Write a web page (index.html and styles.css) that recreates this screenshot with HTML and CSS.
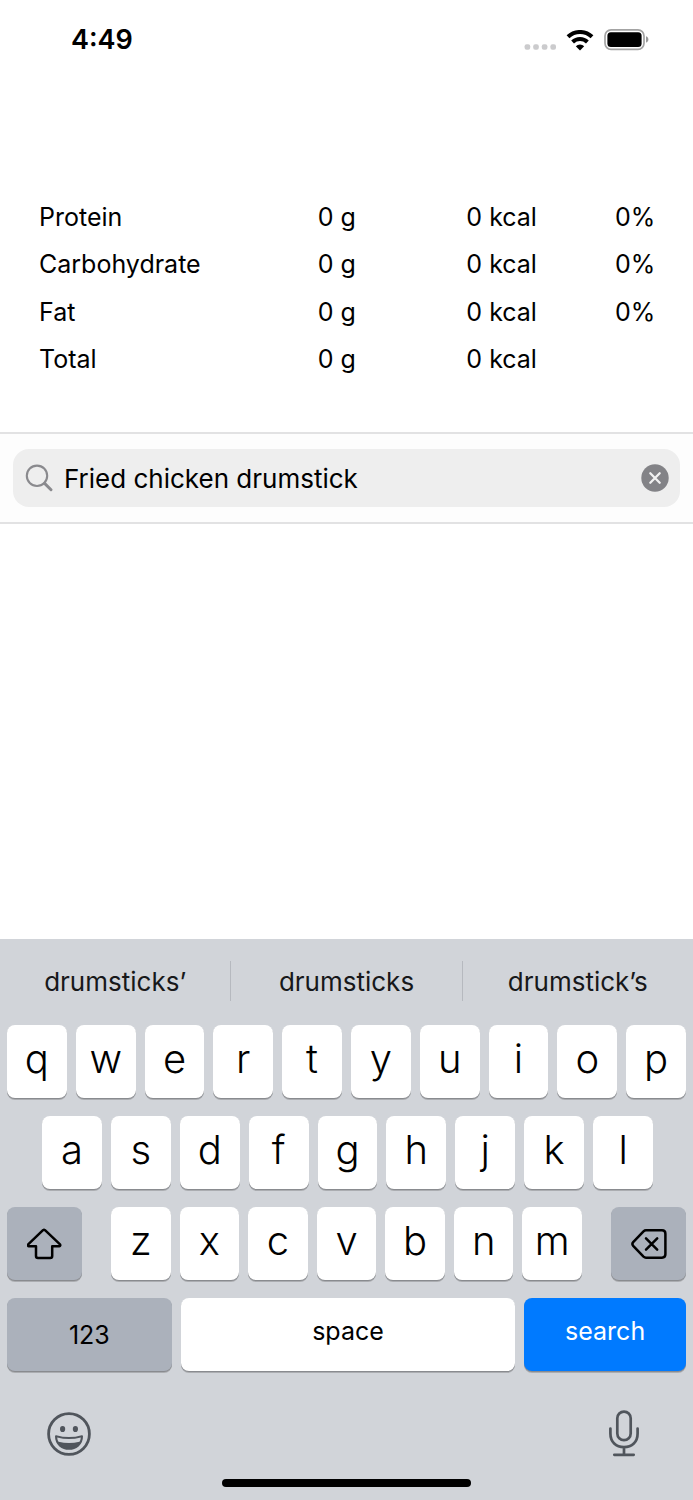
FILE: index.html
```html
<!DOCTYPE html>
<html lang="en">
<head>
<meta charset="utf-8">
<meta name="viewport" content="width=device-width, initial-scale=1">
<title>Food search</title>
<link rel="stylesheet" href="styles.css">
</head>
<body>
<div class="screen">
  <header class="status">
    <time class="status-time">4:49</time>
    <div class="status-icons">
      <svg class="dots" viewBox="0 0 32 6" width="32" height="6" fill="#cbcbcd" aria-hidden="true"><rect x=".6" y=".2" width="5.6" height="5.6" rx="2"/><rect x="9.2" y=".2" width="5.6" height="5.6" rx="2"/><rect x="17.8" y=".2" width="5.6" height="5.6" rx="2"/><rect x="26.4" y=".2" width="5.6" height="5.6" rx="2"/></svg>
      <svg viewBox="0 0 28 21" width="28" height="21" aria-hidden="true"><g fill="none" stroke="#000" stroke-width="4"><path d="M2 6.8a17.3 17.3 0 0 1 24 0"/><path d="M6.6 12a10.6 10.6 0 0 1 14.8 0"/></g><path d="M14 20.5l-4.2-4.3a5.9 5.9 0 0 1 8.4 0z"/></svg>
      <svg viewBox="0 0 45 22" width="45" height="22" aria-hidden="true"><rect x="1" y=".9" width="39" height="19.4" rx="6" fill="none" stroke="#a3a3a3" stroke-width="1.7"/><rect x="3.4" y="3.2" width="34.2" height="14.8" rx="3.5"/><path d="M42 7.2c3.2 1.2 3.2 5.2 0 6.4z" fill="#999"/></svg>
    </div>
  </header>

  <main class="content">
    <table class="nutrition">
      <tbody>
        <tr><th scope="row">Protein</th><td>0 g</td><td>0 kcal</td><td>0%</td></tr>
        <tr><th scope="row">Carbohydrate</th><td>0 g</td><td>0 kcal</td><td>0%</td></tr>
        <tr><th scope="row">Fat</th><td>0 g</td><td>0 kcal</td><td>0%</td></tr>
        <tr><th scope="row">Total</th><td>0 g</td><td>0 kcal</td><td></td></tr>
      </tbody>
    </table>

    <form class="search-bar" role="search">
      <div class="search-field">
        <label for="food" class="search-label" aria-label="Search food"><svg viewBox="0 0 28 28" width="28" height="28" fill="none" stroke="#8a8a8e" stroke-linecap="round" aria-hidden="true"><circle cx="12" cy="11.8" r="10.2" stroke-width="2.1"/><path d="M19.6 19.4l6.4 6.4" stroke-width="2.9"/></svg></label>
        <input id="food" class="search-input" type="text" value="Fried chicken drumstick">
        <button class="clear" type="reset" aria-label="Clear"><svg viewBox="0 0 28 28" width="28" height="28" aria-hidden="true"><circle cx="14" cy="14" r="13.7" fill="#838387"/><path d="M9.3 9.3l9.4 9.4M18.7 9.3l-9.4 9.4" stroke="#f2f2f2" stroke-width="2.3" stroke-linecap="round"/></svg></button>
      </div>
    </form>
  </main>

  <section class="keyboard" aria-label="Keyboard">
    <div class="suggestions">
      <button class="suggestion">drumsticks’</button>
      <button class="suggestion">drumsticks</button>
      <button class="suggestion">drumstick’s</button>
    </div>
    <div class="rows">
      <div class="row">
        <button class="key">q</button><button class="key">w</button><button class="key">e</button><button class="key">r</button><button class="key">t</button><button class="key">y</button><button class="key">u</button><button class="key">i</button><button class="key">o</button><button class="key">p</button>
      </div>
      <div class="row row-home">
        <button class="key">a</button><button class="key">s</button><button class="key">d</button><button class="key">f</button><button class="key">g</button><button class="key">h</button><button class="key">j</button><button class="key">k</button><button class="key">l</button>
      </div>
      <div class="row row-bottom">
        <button class="key key-dark key-side" aria-label="Shift"><svg viewBox="0 0 36 32" width="36" height="32" fill="none" stroke="#000" stroke-width="2.5" stroke-linejoin="round" aria-hidden="true"><path d="M16 2.2Q17 1.4 18 2.2L33 16.4Q33.8 18 32.3 18.2H25.2V28Q25.2 30 23.2 30H11Q9 30 9 28V18.2H1.9Q.4 18 1.2 16.4z"/></svg></button>
        <div class="row letters">
          <button class="key">z</button><button class="key">x</button><button class="key">c</button><button class="key">v</button><button class="key">b</button><button class="key">n</button><button class="key">m</button>
        </div>
        <button class="key key-dark key-side" aria-label="Delete"><svg viewBox="0 0 36 32" width="36" height="32" fill="none" stroke="#000" stroke-width="2.5" stroke-linejoin="round" stroke-linecap="round" aria-hidden="true"><path d="M15 2.3H31Q34.4 2.3 34.4 5.7V26.3Q34.4 29.7 31 29.7H15Q13.7 29.7 12.5 28.6L2.2 17.8Q.6 16 2.2 14.2L12.5 3.4Q13.7 2.3 15 2.3z"/><path d="M15 10.3L26.2 21.7M26.2 10.3L15 21.7"/></svg></button>
      </div>
      <div class="row">
        <button class="key key-dark key-word key-numbers">123</button>
        <button class="key key-word key-space">space</button>
        <button class="key key-word key-search">search</button>
      </div>
    </div>
    <div class="tools">
      <button class="tool" aria-label="Emoji"><svg viewBox="0 0 44 44" width="44" height="44" aria-hidden="true"><circle cx="22" cy="22" r="20.4" fill="none" stroke="#50555c" stroke-width="2.8"/><ellipse cx="15.6" cy="17" rx="2.6" ry="3.1" fill="#50555c"/><ellipse cx="28.4" cy="17" rx="2.6" ry="3.1" fill="#50555c"/><path d="M9 24.2Q22 28 35 24.2C35 41 9 41 9 24.2z" fill="#50555c" stroke="#50555c" stroke-width="2" stroke-linejoin="round"/><path d="M10.2 25.4Q22 28.6 33.8 25.4Q33.6 28.4 32.5 29.8Q22 32.4 11.5 29.8Q10.4 28.4 10.2 25.4z" fill="#d1d4d9"/></svg></button>
      <button class="tool" aria-label="Dictate"><svg viewBox="0 0 32 48" width="32" height="48" fill="none" stroke="#50555c" stroke-width="2.7" stroke-linecap="round" aria-hidden="true"><rect x="9.3" y="1.6" width="13.4" height="28.6" rx="6.7"/><path d="M2.4 18.5V23.5C2.4 32 8 37.2 16 37.2S29.6 32 29.6 23.5V18.5M16 37.2V44.8M6.3 44.8H25.7"/></svg></button>
    </div>
    <div class="home-indicator"></div>
  </section>
</div>
</body>
</html>
```
FILE: styles.css
```css
* {
  box-sizing: border-box;
}

body {
  margin: 0;
  background: #fff;
  color: #000;
  font-family: Inter, "Liberation Sans", sans-serif;
  font-size: 25px;
}

button,
input {
  margin: 0;
  padding: 0;
  border: 0;
  background: none;
  color: inherit;
  font: inherit;
}

svg {
  display: block;
}

.screen {
  display: flex;
  flex-direction: column;
  min-height: 100vh;
}

.status {
  display: flex;
  align-items: center;
  justify-content: space-between;
  padding: 22px 44px 0 71px;
}

.status-time {
  font-size: 27px;
  line-height: 36px;
  font-weight: 600;
}

.status-icons {
  display: flex;
  align-items: center;
  gap: 10px;
}

.dots {
  margin-top: 13px;
}

.content {
  flex: 1;
  padding-top: 135px;
}

.nutrition {
  width: calc(100% - 79px);
  height: 190px;
  margin: 0 40px 49px 39px;
  border-collapse: collapse;
  table-layout: fixed;
}

.nutrition th,
.nutrition td {
  width: 24.2%;
  padding: 0;
  font-weight: 400;
  text-align: left;
  white-space: nowrap;
}

.nutrition th {
  width: 45.4%;
}

.nutrition td:last-child {
  width: 6.2%;
}

.search-bar {
  padding: 15px 13px;
  border-top: 2px solid #e2e2e3;
  border-bottom: 2px solid #e2e2e3;
  background: #fdfdfd;
}

.search-field {
  display: flex;
  align-items: center;
  height: 58px;
  padding: 0 11px 0 12px;
  border-radius: 16px;
  background: #eeeeee;
}

.search-input {
  flex: 1;
  min-width: 0;
  padding: 2px 11px 0;
  font-size: 26px;
  line-height: 40px;
  outline: 0;
}

.keyboard {
  padding-bottom: 13px;
  background: #d1d4d9;
}

.suggestions {
  display: flex;
  padding: 22px 0 24px;
}

.suggestion {
  flex: 1;
  padding-top: 1px;
  color: #17181a;
  font-size: 26px;
  line-height: 39px;
}

.suggestion + .suggestion {
  border-left: 1px solid #b6b9bf;
}

.rows {
  display: flex;
  flex-direction: column;
  gap: 18px;
  padding: 0 7px;
}

.row {
  display: flex;
  gap: 9px;
}

.row-home {
  padding: 0 33px 0 35px;
}

.row-bottom {
  gap: 29px;
}

.letters {
  flex: 1;
}

.key {
  display: flex;
  flex: 1;
  align-items: center;
  justify-content: center;
  min-width: 0;
  height: 73px;
  padding-bottom: 7px;
  border-radius: 8px;
  background: #fff;
  box-shadow: 0 1px 0 #898b8f, 0 2px 0 #abadb1;
  font-size: 40px;
  font-weight: 300;
}

.key-dark {
  padding-bottom: 0;
  background: #abb1bb;
}

.key-side {
  flex: 0 0 75px;
}

.key-word {
  font-size: 25px;
  font-weight: 400;
}

.key-numbers {
  flex: 165;
}

.key-space {
  flex: 335;
}

.key-search {
  flex: 162;
  background: #007aff;
  color: #fff;
}

.tools {
  display: flex;
  align-items: center;
  justify-content: space-between;
  padding: 39px 53px 21px 47px;
}

.home-indicator {
  width: 36%;
  height: 8px;
  margin: 0 auto;
  border-radius: 4px;
  background: #000;
}
```
